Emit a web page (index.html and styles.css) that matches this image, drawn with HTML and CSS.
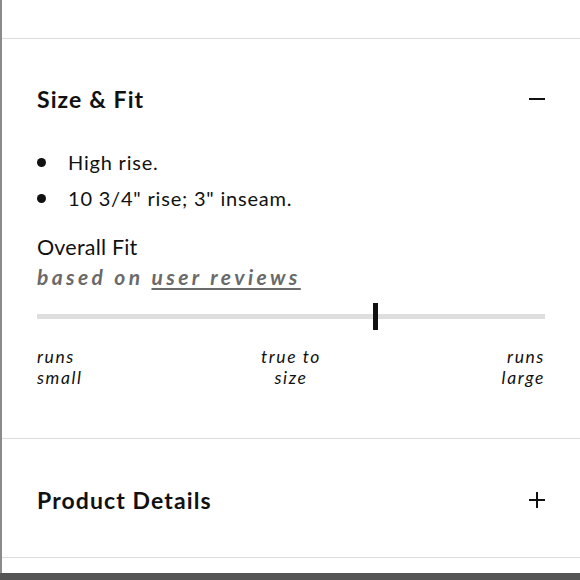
FILE: index.html
```html
<!DOCTYPE html>
<html>
<head>
<meta charset="utf-8">
<link rel="stylesheet" href="styles.css">
</head>
<body>
<div class="page">
  <div class="top-space"></div>
  <section class="panel open">
    <div class="panel-head">
      <h2 class="panel-title">Size &amp; Fit</h2>
      <span class="toggle minus"></span>
    </div>
    <ul class="bullets">
      <li>High rise.</li>
      <li>10 3/4" rise; 3" inseam.</li>
    </ul>
    <div class="fit-title">Overall Fit</div>
    <div class="fit-sub">based on <span class="link">user reviews</span></div>
    <div class="track">
      <div class="marker" style="left: 66.5%"></div>
    </div>
    <div class="labels">
      <div class="lab left">runs<br>small</div>
      <div class="lab mid">true to<br>size</div>
      <div class="lab right">runs<br>large</div>
    </div>
  </section>
  <section class="panel closed">
    <div class="panel-head">
      <h2 class="panel-title">Product Details</h2>
      <span class="toggle plus"></span>
    </div>
  </section>
  <div class="after-space"></div>
  <div class="bottom-bar"></div>
</div>
</body>
</html>
```
FILE: styles.css
```css
html, body {
  margin: 0;
  padding: 0;
  background: #fff;
}
body {
  width: 580px;
  height: 580px;
  overflow: hidden;
  font-family: "Lato", "Open Sans", sans-serif;
  color: #111;
}
.page {
  width: 580px;
  height: 580px;
  display: flex;
  flex-direction: column;
  border-left: 2px solid #8a8a8a;
  box-sizing: border-box;
}
.top-space {
  height: 38px;
  flex: none;
}
.panel {
  border-top: 1px solid #dcdcdc;
  padding: 0 35px 0 35px;
  flex: none;
}
.panel-head {
  display: flex;
  justify-content: space-between;
  align-items: center;
  height: 30px;
}
.open .panel-head {
  margin-top: 45px;
}
.closed {
  height: 118px;
  display: flex;
  flex-direction: column;
  justify-content: center;
  border-bottom: 1px solid #dcdcdc;
}
.closed .panel-head {
  margin-top: 4px;
}
.panel-title {
  margin: 0;
  font-size: 23px;
  font-weight: 700;
  line-height: 30px;
  letter-spacing: 1.1px;
}
.toggle {
  position: relative;
  width: 16px;
  height: 16px;
  display: block;
}
.toggle::before {
  content: "";
  position: absolute;
  left: 0;
  top: 7px;
  width: 16px;
  height: 2px;
  background: #111;
}
.plus::after {
  content: "";
  position: absolute;
  left: 7px;
  top: 0;
  width: 2px;
  height: 16px;
  background: #111;
}
.bullets {
  list-style: none;
  margin: 30px 0 0 0;
  padding: 0;
}
.bullets li {
  position: relative;
  padding-left: 31px;
  font-size: 20px;
  line-height: 36px;
  letter-spacing: 0.8px;
}
.bullets li::before {
  content: "";
  position: absolute;
  left: 0;
  top: 14px;
  width: 9px;
  height: 9px;
  border-radius: 50%;
  background: #111;
}
.fit-title {
  margin-top: 16px;
  font-size: 21.5px;
  line-height: 30px;
  letter-spacing: 0.2px;
}
.fit-sub {
  font-size: 21px;
  line-height: 30px;
  font-weight: 700;
  font-style: italic;
  color: #6a6a6a;
  letter-spacing: 3.4px;
}
.link {
  text-decoration: underline;
  text-decoration-thickness: 2px;
  text-underline-offset: 3px;
}
.track {
  position: relative;
  margin: 22px 0 0 0;
  height: 5px;
  background: #dedede;
}
.marker {
  position: absolute;
  top: -11px;
  width: 5px;
  height: 27px;
  margin-left: -2px;
  background: #111;
}
.labels {
  display: grid;
  grid-template-columns: 1fr 1fr 1fr;
  margin-top: 27px;
  font-size: 17.5px;
  line-height: 21px;
  font-style: italic;
  letter-spacing: 1.6px;
}
.lab.left { text-align: left; }
.lab.mid { text-align: center; }
.lab.right { text-align: right; }
.open {
  height: 400px;
  box-sizing: border-box;
}
.after-space {
  flex: 1;
}
.bottom-bar {
  height: 7px;
  background: #555;
  flex: none;
  margin-left: -2px;
}
```
